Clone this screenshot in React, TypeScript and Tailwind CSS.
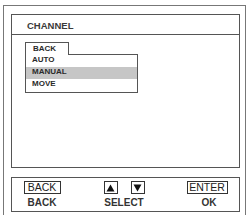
const FONT = { fontFamily: '"Liberation Sans", Arial, sans-serif' }

function Arrow({ dir }: { dir: 'up' | 'down' }) {
  return (
    <div className="flex h-[13px] w-[14px] items-center justify-center border-[1.5px] border-[#333] bg-white">
      <svg width="9" height="8" viewBox="0 0 9 8">
        {dir === 'up' ? (
          <polygon points="4.5,0.5 8.5,7.5 0.5,7.5" fill="#111" />
        ) : (
          <polygon points="0.5,0.5 8.5,0.5 4.5,7.5" fill="#111" />
        )}
      </svg>
    </div>
  )
}

function KeyBox({ label, width }: { label: string; width: string }) {
  return (
    <div
      className={`flex h-[13px] ${width} items-center justify-center border-[1.5px] border-[#333] text-[10.5px] font-normal leading-none text-[#222]`}
    >
      {label}
    </div>
  )
}

export default function App() {
  const items = ['AUTO', 'MANUAL', 'MOVE']

  return (
    <div className="h-[215px] w-[246px] overflow-hidden bg-white" style={FONT}>
      <div className="ml-[3px] mt-[5px] h-[230px] w-[243px] border border-[#777] pl-[7px] pt-[8px]">
        {/* menu panel */}
        <div className="h-[154px] w-[229px] border-[1.5px] border-[#555]">
          <div className="flex h-[20px] items-center border-b-[1.5px] border-[#555] pl-[15px] pt-[3px] text-[9.5px] font-bold text-[#3a3a3a]">
            CHANNEL
          </div>

          <div className="ml-[13px] mt-[7px] w-[113px] text-[8px] font-bold text-[#2a2a2a]">
            <div className="flex">
              <div className="h-[13px] w-[44px] border-x-[1.5px] border-t-[1.5px] border-[#555] pl-[7px] leading-[11px]">
                BACK
              </div>
              <div className="flex-1 border-b-[1.5px] border-[#555]" />
            </div>
            <div className="border-x-[1.5px] border-b-[1.5px] border-[#555] pb-[1px]">
              {items.map((it) => (
                <div
                  key={it}
                  className={`h-[12px] pl-[6px] leading-[10px] ${it === 'MANUAL' ? 'bg-[#c6c6c6]' : ''}`}
                >
                  {it}
                </div>
              ))}
            </div>
          </div>
        </div>

        {/* footer */}
        <div className="mt-[9px] flex h-[35px] w-[229px] border-[1.5px] border-[#555] pt-[3px] text-[10px] font-bold text-[#333]">
          <div className="flex w-[60px] flex-col items-center gap-[3px]">
            <KeyBox label="BACK" width="w-[37px]" />
            <span className="leading-[12px]">BACK</span>
          </div>
          <div className="flex w-[104px] flex-col items-center gap-[3px]">
            <div className="flex gap-[13px]">
              <Arrow dir="up" />
              <Arrow dir="down" />
            </div>
            <span className="leading-[12px]">SELECT</span>
          </div>
          <div className="flex w-[62px] flex-col items-center gap-[3px]">
            <KeyBox label="ENTER" width="w-[41px]" />
            <span className="pl-[4px] leading-[12px]">OK</span>
          </div>
        </div>
      </div>
    </div>
  )
}
